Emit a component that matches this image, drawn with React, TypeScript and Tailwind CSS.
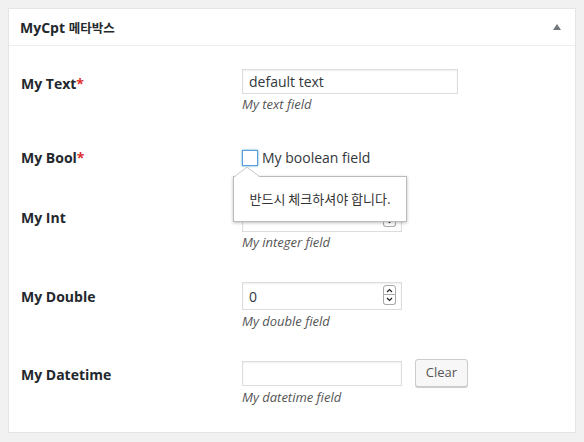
import React from "react";

const font = { fontFamily: '"Open Sans", "Noto Sans CJK KR", sans-serif' };
const kr = { fontFamily: '"Noto Sans CJK KR", sans-serif' };

function Spinner() {
  return (
    <div className="absolute right-[5px] top-[2px] flex flex-col">
      <div className="flex h-[10px] w-[13px] items-center justify-center rounded-t-[3px] border border-[#a9a9a9] bg-white">
        <svg width="7" height="5" viewBox="0 0 7 5"><path d="M1 4 L3.5 1.5 L6 4" fill="none" stroke="#222" strokeWidth="1.2" /></svg>
      </div>
      <div className="flex h-[10px] w-[13px] items-center justify-center rounded-b-[3px] border border-t-0 border-[#a9a9a9] bg-white">
        <svg width="7" height="5" viewBox="0 0 7 5"><path d="M1 1 L3.5 3.5 L6 1" fill="none" stroke="#222" strokeWidth="1.2" /></svg>
      </div>
    </div>
  );
}

function Label({ text, req, mt }: { text: string; req?: boolean; mt: string }) {
  return (
    <div className={`w-[233px] shrink-0 pl-[12px] text-[14px] font-bold leading-[20px] text-[#23282d] ${mt}`}>
      {text}
      {req && <span className="text-[#dc3232]">*</span>}
    </div>
  );
}

function Desc({ text, mt }: { text: string; mt: string }) {
  return <div className={`text-[13px] italic leading-[18px] text-[#555] ${mt}`}>{text}</div>;
}

export default function App() {
  return (
    <div className="min-h-[442px] w-[584px] bg-[#f1f1f1] pt-[8px] pl-[8px]" style={font}>
      <div className="relative h-[425px] w-[568px] border border-[#e5e5e5] bg-white">
        <div className="flex h-[37px] items-center justify-between border-b border-[#eee] pl-[11px] pr-[14px]">
          <div className="text-[14px] font-bold text-[#23282d]">
            MyCpt <span className="text-[12.5px]" style={kr}>메타박스</span>
          </div>
          <svg width="8" height="6" viewBox="0 0 8 6"><path d="M4 0 L8 6 L0 6 Z" fill="#72777c" /></svg>
        </div>

        {/* Row 1 */}
        <div className="flex h-[82px] items-start">
          <Label text="My Text" req mt="mt-[28px]" />
          <div className="mt-[23px]">
            <div className="flex h-[25px] w-[216px] items-center border border-[#ddd] px-[6px] text-[14px] text-[#32373c] shadow-[inset_0_1px_2px_rgba(0,0,0,0.07)]">default text</div>
            <Desc text="My text field" mt="mt-[1px]" />
          </div>
        </div>

        {/* Row 2 */}
        <div className="flex h-[60px] items-start">
          <Label text="My Bool" req mt="mt-[20px]" />
          <div className="mt-[21px] flex items-center">
            <div className="h-[16px] w-[16px] border border-[#5b9dd9] shadow-[0_0_2px_rgba(30,140,190,0.8)]" />
            <span className="ml-[4px] text-[14px] leading-[18px] text-[#32373c]">My boolean field</span>
          </div>
        </div>

        {/* Row 3 */}
        <div className="flex h-[78px] items-start">
          <Label text="My Int" mt="mt-[20px]" />
          <div className="mt-[16px]">
            <div className="relative h-[28px] w-[160px] border border-[#ddd] shadow-[inset_0_1px_2px_rgba(0,0,0,0.07)]">
              <Spinner />
            </div>
            <Desc text="My integer field" mt="mt-[1px]" />
          </div>
        </div>

        {/* Row 4 */}
        <div className="flex h-[78px] items-start">
          <Label text="My Double" mt="mt-[21px]" />
          <div className="mt-[16px]">
            <div className="relative flex h-[28px] w-[160px] items-center border border-[#ddd] px-[6px] text-[14px] text-[#32373c] shadow-[inset_0_1px_2px_rgba(0,0,0,0.07)]">
              0
              <Spinner />
            </div>
            <Desc text="My double field" mt="mt-[2px]" />
          </div>
        </div>

        {/* Row 5 */}
        <div className="flex items-start">
          <Label text="My Datetime" mt="mt-[21px]" />
          <div className="mt-[15px]">
            <div className="flex items-center">
              <div className="h-[25px] w-[160px] border border-[#ddd] shadow-[inset_0_1px_2px_rgba(0,0,0,0.07)]" />
              <div className="ml-[13px] flex h-[28px] w-[53px] items-center justify-center rounded-[3px] border border-[#ccc] bg-[#f7f7f7] text-[13px] text-[#555] shadow-[0_1px_0_#ccc]">Clear</div>
            </div>
            <Desc text="My datetime field" mt="mt-[1px]" />
          </div>
        </div>

        {/* Tooltip */}
        <div className="absolute left-[224px] top-[157px]">
          <div className="mt-[10px] flex h-[46px] w-[174px] items-center justify-center border border-[#bbb] bg-white text-[13px] text-[#333] shadow-[0_1px_3px_rgba(0,0,0,0.25)]" style={kr}>
            반드시 체크하셔야 합니다.
          </div>
          <svg className="absolute left-[0px] top-[0px]" width="30" height="12" viewBox="0 0 30 12">
            <path d="M1 11.5 L14 1 L27 11.5 Z" fill="white" />
            <path d="M1 11 L14 1 L27 11" fill="none" stroke="#c8c8c8" strokeWidth="1" />
          </svg>
        </div>
      </div>
    </div>
  );
}
